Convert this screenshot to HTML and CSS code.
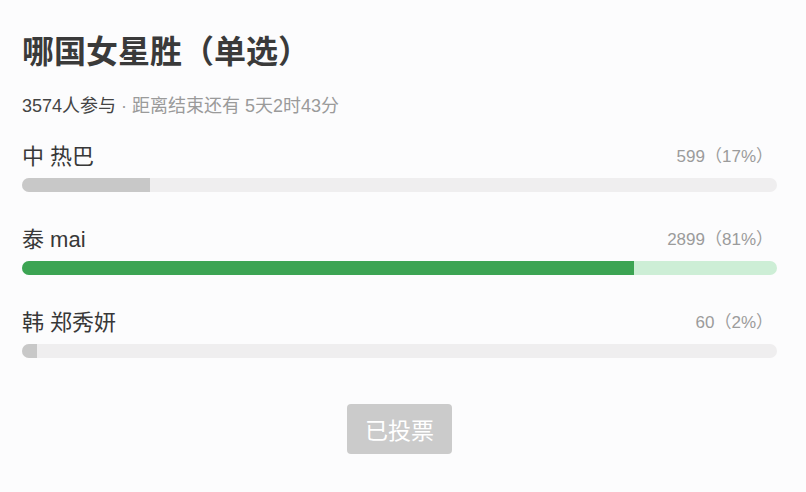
FILE: index.html
```html
<!DOCTYPE html>
<html lang="zh-CN">
<head>
    <meta charset="UTF-8">
    <meta name="viewport" content="width=device-width, initial-scale=1.0">
    <title>投票</title>
    <link rel="stylesheet" href="styles.css">
</head>
<body>
    <div class="poll">
        <h1 class="poll-title">哪国女星胜（单选）</h1>
        <p class="poll-meta"><span class="count">3574人参与</span> · 距离结束还有 5天2时43分</p>

        <div class="option">
            <div class="option-head">
                <span class="option-name">中 热巴</span>
                <span class="option-result">599（17%）</span>
            </div>
            <div class="bar"><div class="bar-fill" style="width: 17%"></div></div>
        </div>

        <div class="option chosen">
            <div class="option-head">
                <span class="option-name">泰 mai</span>
                <span class="option-result">2899（81%）</span>
            </div>
            <div class="bar"><div class="bar-fill" style="width: 81%"></div></div>
        </div>

        <div class="option">
            <div class="option-head">
                <span class="option-name">韩 郑秀妍</span>
                <span class="option-result">60（2%）</span>
            </div>
            <div class="bar"><div class="bar-fill" style="width: 2%"></div></div>
        </div>

        <div class="actions">
            <button class="vote-button" disabled>已投票</button>
        </div>
    </div>
</body>
</html>
```

FILE: styles.css
```css
body {
    font-family: "Liberation Sans", "Noto Sans CJK SC", sans-serif;
    margin: 0;
    padding: 0;
    background-color: #fcfcfd;
    color: #333;
}

.poll {
    width: 755px;
    padding: 30px 22px 0;
}

.poll-title {
    margin: 0;
    font-size: 32px;
    line-height: 44px;
    font-weight: bold;
    color: #3a3a3a;
}

.poll-meta {
    margin: 21px 0 24px;
    font-size: 18px;
    line-height: 22px;
    color: #9a9a9a;
}

.poll-meta .count {
    color: #444;
}

.option {
    margin-bottom: 32px;
}

.option-head {
    display: flex;
    justify-content: space-between;
    align-items: flex-start;
    height: 30px;
    margin-bottom: 7px;
}

.option-name {
    font-size: 22px;
    line-height: 32px;
    color: #383838;
}

.option-result {
    font-size: 17px;
    line-height: 32px;
    color: #9b9b9b;
    padding-right: 4px;
}

.bar {
    height: 14px;
    border-radius: 7px;
    background-color: #efeeef;
    overflow: hidden;
}

.bar-fill {
    height: 100%;
    background-color: #c8c8c8;
}

.chosen .bar {
    background-color: #cdeed6;
}

.chosen .bar-fill {
    background-color: #3ca453;
}

.actions {
    display: flex;
    justify-content: center;
    padding-top: 14px;
}

.vote-button {
    width: 105px;
    height: 50px;
    border: none;
    border-radius: 4px;
    background-color: #cbcbcb;
    color: #fff;
    font-family: "Noto Sans CJK SC", sans-serif;
    font-size: 23px;
    cursor: default;
}
```
